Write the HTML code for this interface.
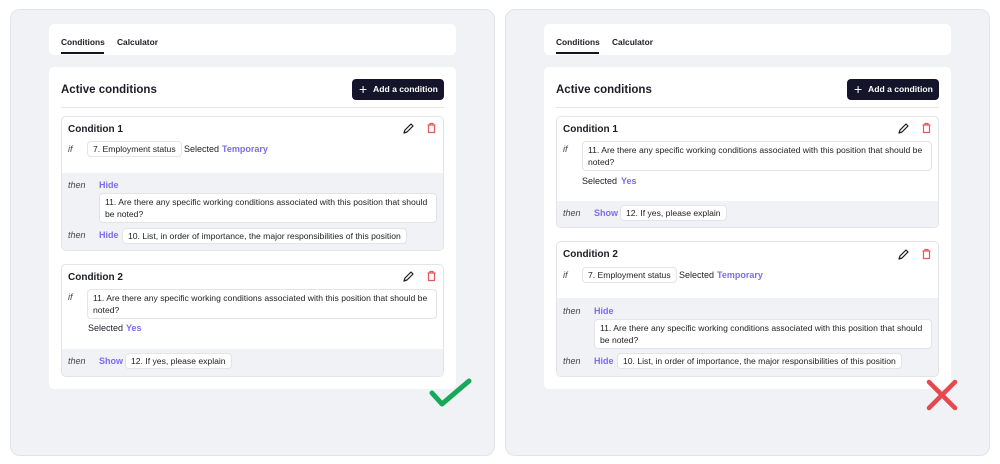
<!DOCTYPE html>
<html><head><meta charset="utf-8"><style>
*{margin:0;padding:0;box-sizing:border-box}
body{width:1000px;height:464px;background:#fff;position:relative;overflow:hidden;font-family:"Liberation Sans",sans-serif;color:#1d1d26}
.a{position:absolute}
.panel{position:absolute;top:9px;width:485px;height:447px;background:#f1f2f6;border:1px solid #e2e3e9;border-radius:10px}
.w{position:absolute;left:0;top:0;width:1000px;height:464px}
.card{position:absolute;background:#fff;border-radius:5px}
.cond{position:absolute;background:#fff;border:1px solid #e3e4ea;border-radius:5px;overflow:hidden}
.gray{position:absolute;left:0;right:0;bottom:0;background:#f1f2f6}
.t{position:absolute;font-size:9px;line-height:12px;white-space:nowrap}
.b{font-weight:bold}
.i{font-style:italic;color:#444}
.p{color:#7b6cf0;font-weight:bold}
.chip{position:absolute;background:#fff;border:1px solid #e3e4ea;border-radius:4px;font-size:8.6px;line-height:12px;padding:1px 5px;white-space:nowrap;color:#222}
.chip2{white-space:normal;padding:2px 5px}
.btn{position:absolute;background:#14142b;border-radius:4px;color:#fff;font-size:8.6px;font-weight:bold;line-height:21px;padding-left:21px;white-space:nowrap}
</style></head><body>
<div class="panel" style="left:10px"></div>
<div class="panel" style="left:505px"></div>

<!-- LEFT -->
<div class="w">
<div class="card" style="left:49px;top:24px;width:407px;height:31px"></div>
<div class="t b" style="left:61px;top:36px;font-size:8.4px">Conditions</div>
<div class="a" style="left:61px;top:52px;width:43px;height:2px;background:#14142b"></div>
<div class="t b" style="left:117px;top:36px;font-size:8.4px">Calculator</div>
<div class="card" style="left:49px;top:67px;width:407px;height:322px"></div>
<div class="t b" style="left:61px;top:83px;font-size:11.5px;line-height:14px">Active conditions</div>
<div class="a" style="left:61px;top:107px;width:383px;height:1px;background:#e5e6eb"></div>
<div class="btn" style="left:352px;top:79px;width:92px;height:21px">Add a condition</div>
<div class="t" style="left:359px;top:83px;color:#fff;font-size:14px;line-height:12px">+</div>

<div class="cond" style="left:61px;top:116px;width:383px;height:135px"><div class="gray" style="top:56px"></div></div>
<div class="t b" style="left:68px;top:123px;font-size:10px;line-height:14px">Condition 1</div>
<div class="t i" style="left:68px;top:143px">if</div>
<div class="chip" style="left:87px;top:141px">7. Employment status</div>
<div class="t" style="left:184px;top:143px">Selected</div>
<div class="t p" style="left:222px;top:143px">Temporary</div>
<div class="t i" style="left:68px;top:179px">then</div>
<div class="t p" style="left:99px;top:179px">Hide</div>
<div class="chip chip2" style="left:99px;top:193px;width:338px">11. Are there any specific working conditions associated with this position that should be noted?</div>
<div class="t i" style="left:68px;top:229px">then</div>
<div class="t p" style="left:99px;top:229px">Hide</div>
<div class="chip" style="left:122px;top:228px">10. List, in order of importance, the major responsibilities of this position</div>

<div class="cond" style="left:61px;top:264px;width:383px;height:113px"><div class="gray" style="top:84px"></div></div>
<div class="t b" style="left:68px;top:271px;font-size:10px;line-height:14px">Condition 2</div>
<div class="t i" style="left:68px;top:291px">if</div>
<div class="chip chip2" style="left:87px;top:289px;width:350px">11. Are there any specific working conditions associated with this position that should be noted?</div>
<div class="t" style="left:88px;top:322px">Selected</div>
<div class="t p" style="left:126px;top:322px">Yes</div>
<div class="t i" style="left:68px;top:355px">then</div>
<div class="t p" style="left:99px;top:355px">Show</div>
<div class="chip" style="left:125px;top:353px">12. If yes, please explain</div>
</div>

<!-- RIGHT -->
<div class="w">
<div class="card" style="left:544px;top:24px;width:407px;height:31px"></div>
<div class="t b" style="left:556px;top:36px;font-size:8.4px">Conditions</div>
<div class="a" style="left:556px;top:52px;width:43px;height:2px;background:#14142b"></div>
<div class="t b" style="left:612px;top:36px;font-size:8.4px">Calculator</div>
<div class="card" style="left:544px;top:67px;width:407px;height:322px"></div>
<div class="t b" style="left:556px;top:83px;font-size:11.5px;line-height:14px">Active conditions</div>
<div class="a" style="left:556px;top:107px;width:383px;height:1px;background:#e5e6eb"></div>
<div class="btn" style="left:847px;top:79px;width:92px;height:21px">Add a condition</div>
<div class="t" style="left:854px;top:83px;color:#fff;font-size:14px;line-height:12px">+</div>

<div class="cond" style="left:556px;top:116px;width:383px;height:112px"><div class="gray" style="top:84px"></div></div>
<div class="t b" style="left:563px;top:123px;font-size:10px;line-height:14px">Condition 1</div>
<div class="t i" style="left:563px;top:143px">if</div>
<div class="chip chip2" style="left:582px;top:141px;width:350px">11. Are there any specific working conditions associated with this position that should be noted?</div>
<div class="t" style="left:582px;top:175px">Selected</div>
<div class="t p" style="left:621px;top:175px">Yes</div>
<div class="t i" style="left:563px;top:207px">then</div>
<div class="t p" style="left:594px;top:207px">Show</div>
<div class="chip" style="left:620px;top:205px">12. If yes, please explain</div>

<div class="cond" style="left:556px;top:241px;width:383px;height:136px"><div class="gray" style="top:56px"></div></div>
<div class="t b" style="left:563px;top:248px;font-size:10px;line-height:14px">Condition 2</div>
<div class="t i" style="left:563px;top:269px">if</div>
<div class="chip" style="left:582px;top:267px">7. Employment status</div>
<div class="t" style="left:679px;top:269px">Selected</div>
<div class="t p" style="left:717px;top:269px">Temporary</div>
<div class="t i" style="left:563px;top:305px">then</div>
<div class="t p" style="left:594px;top:305px">Hide</div>
<div class="chip chip2" style="left:594px;top:319px;width:338px">11. Are there any specific working conditions associated with this position that should be noted?</div>
<div class="t i" style="left:563px;top:355px">then</div>
<div class="t p" style="left:594px;top:355px">Hide</div>
<div class="chip" style="left:617px;top:353px">10. List, in order of importance, the major responsibilities of this position</div>
</div>

<!-- icons -->
<svg class="a" style="left:0;top:0" width="1000" height="464">
<g fill="none" stroke="#1d1d26" stroke-width="1.2" stroke-linejoin="round">
<path d="M404 133 L405 130 L411 124 L413 126 L407 132 Z"/>
<path d="M899 133 L900 130 L906 124 L908 126 L902 132 Z"/>
<path d="M404 281 L405 278 L411 272 L413 274 L407 280 Z"/>
<path d="M899 259 L900 256 L906 250 L908 252 L902 258 Z"/>
</g>
<g fill="none" stroke="#e5585b" stroke-width="1.2">
<path d="M427.5 125 h8 M430 125 v-1.5 h3 v1.5 M428.5 125 v7.5 h6 v-7.5"/>
<path d="M922.5 125 h8 M925 125 v-1.5 h3 v1.5 M923.5 125 v7.5 h6 v-7.5"/>
<path d="M427.5 273 h8 M430 273 v-1.5 h3 v1.5 M428.5 273 v7.5 h6 v-7.5"/>
<path d="M922.5 251 h8 M925 251 v-1.5 h3 v1.5 M923.5 251 v7.5 h6 v-7.5"/>
</g>
<path d="M432 393 L442 404 L469 381" fill="none" stroke="#17a85a" stroke-width="5" stroke-linecap="round" stroke-linejoin="round"/>
<path d="M929 382 L955 408 M955 382 L929 408" fill="none" stroke="#e5484d" stroke-width="4.5" stroke-linecap="round"/>
</svg>
</body></html>
